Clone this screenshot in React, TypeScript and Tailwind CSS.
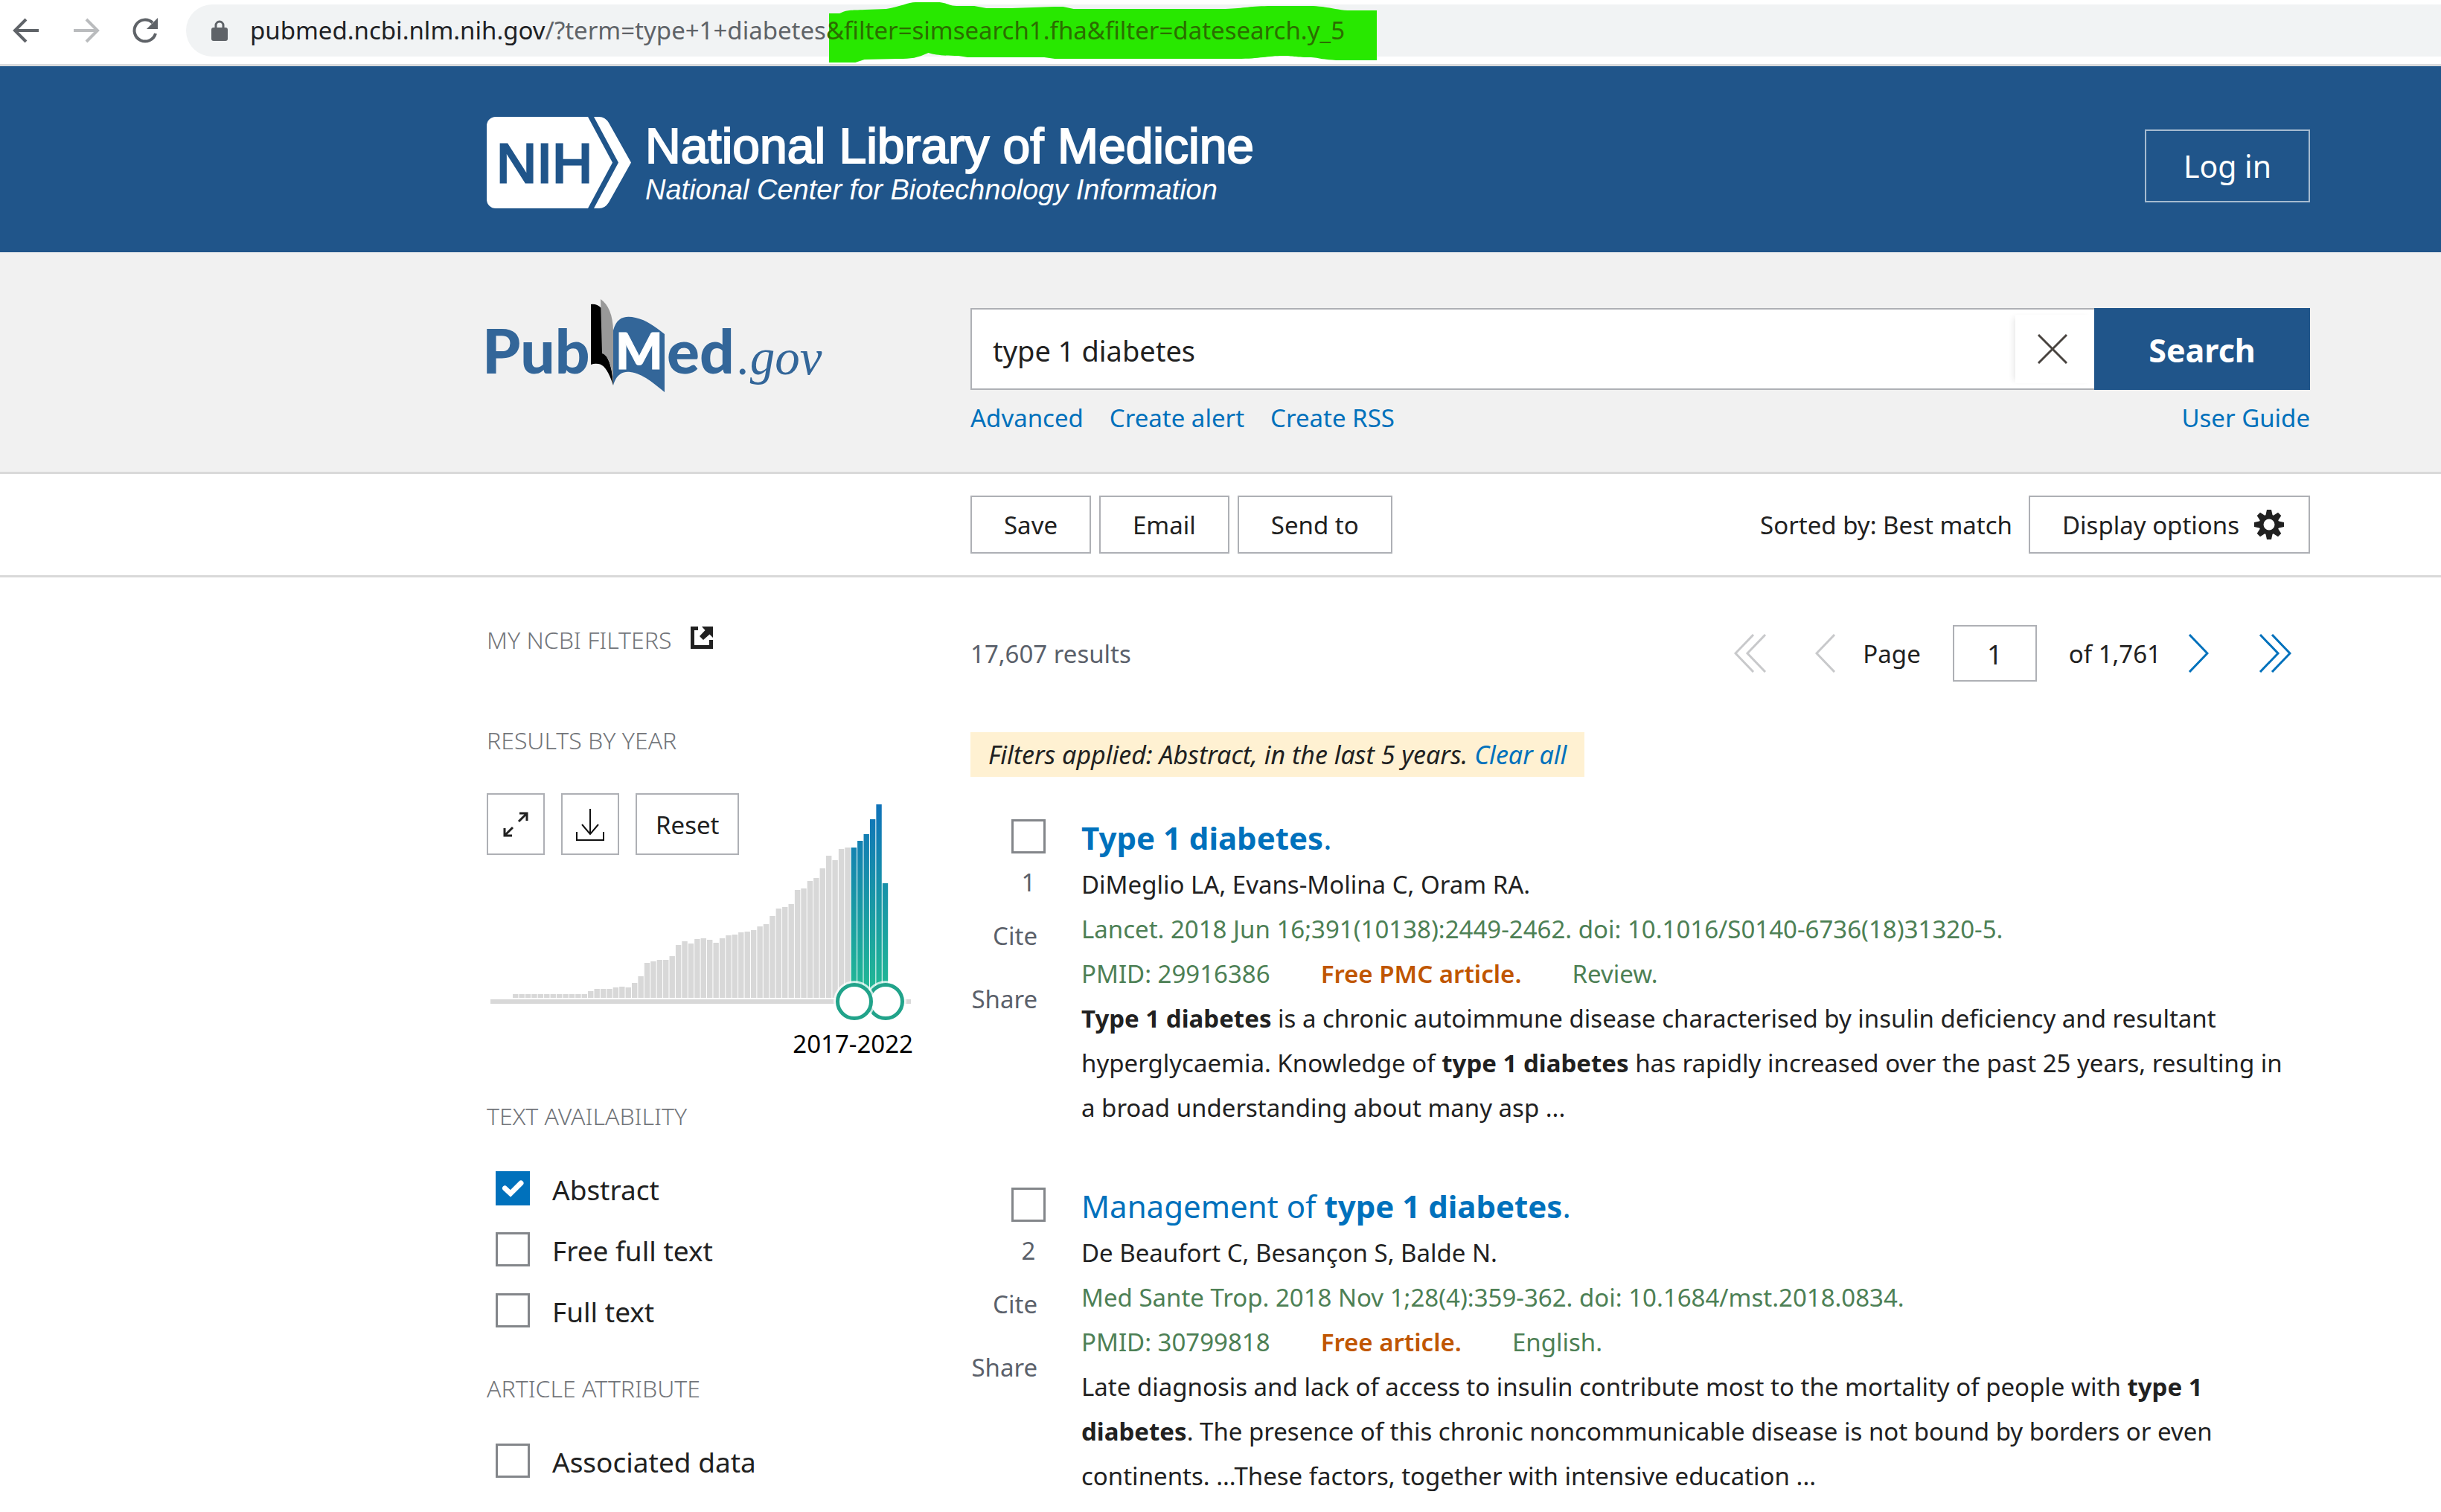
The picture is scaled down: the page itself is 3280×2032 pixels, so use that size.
import { useState, type ReactNode } from "react";

const barHeights = [
  5, 5, 5, 5, 5, 5, 5, 5, 5, 5, 5, 5, 9, 12, 12, 12, 14, 15, 14, 20, 29, 47, 49, 51, 51, 56, 71, 76, 73, 79, 80, 78,
  74, 80, 84, 85, 88, 89, 91, 96, 99, 110, 120, 122, 126, 145, 147, 157, 161, 174, 191, 185, 200, 202, 202, 211, 220,
  240, 260, 154,
];
const selectedFrom = 54;

function BrowserBar() {
  return (
    <div className="flex items-center border-b-3 border-[#dadbdd] bg-white pt-[6px] pb-[10px]">
      <button aria-label="Back" className="ml-[16px]">
        <svg width="38" height="38" viewBox="0 0 38 38" fill="none" stroke="#5f6368" strokeWidth="4">
          <path d="M36 19H5M19 4L4 19l15 15" />
        </svg>
      </button>
      <button aria-label="Forward" className="ml-[43px]">
        <svg width="38" height="38" viewBox="0 0 38 38" fill="none" stroke="#babcbe" strokeWidth="4">
          <path d="M2 19h31M19 4l15 15-15 15" />
        </svg>
      </button>
      <button aria-label="Reload" className="ml-[41px]">
        <svg width="38" height="38" viewBox="0 0 38 38" fill="none">
          <path d="M33 23A14.500 14.500 0 1 1 29 8.500" stroke="#5f6368" strokeWidth="4" />
          <path d="M36 2v15H21z" fill="#5f6368" />
        </svg>
      </button>
      <div className="ml-[36px] flex h-[70px] flex-1 items-center rounded-l-full bg-[#f1f3f4] pl-[34px]">
        <svg width="22" height="28" viewBox="0 0 22 28" className="mr-[30px] shrink-0">
          <path d="M6 12V7a5 5 0 0 1 10 0v5" fill="none" stroke="#5f6368" strokeWidth="3" />
          <rect x="0" y="10" width="22" height="18" rx="3" fill="#5f6368" />
        </svg>
        <p className="text-[33px] leading-[70px] whitespace-nowrap text-[#5f6368]">
          <span className="text-[#202124]">pubmed.ncbi.nlm.nih.gov</span>/?term=type+1+diabetes
          <span className="relative isolate inline-block text-[#2b6e00]">
            <svg
              className="absolute top-[-4px] left-[4px] -z-10 h-[84px] w-[736px]"
              viewBox="0 0 728 84"
              preserveAspectRatio="none"
            >
              <path
                d="M0 16h14C24 11 28 12 48 11l28-1C95 7 105 1 115 1h32c14 2 12 5 26 5h20l16 3h34l56-2h12l14 3h202c26-1 32-4 62-4h54c20 1 30 5 46 6h40v67h-55c-20-1-25-4-36-4-20 0-20-2-35-2-20 0-30 4-60 4H300l-14-2H184l-12-2c-20 0-30-1-40-4-15 7-22 8-40 8l-45 1-12 4H0z"
                fill="#28e800"
              />
            </svg>
            &amp;filter=simsearch1.fha&amp;filter=datesearch.y_5
          </span>
        </p>
      </div>
    </div>
  );
}

function SiteHeader() {
  return (
    <header className="flex h-[250px] items-start justify-between bg-[#20558a] pt-[68px] pr-[176px] pl-[654px] text-white">
      <a href="#home" className="flex">
        <svg width="196" height="123" viewBox="0 0 196 123" aria-label="NIH">
          <path d="M12 0H136L169 61.500 136 123H12A12 12 0 0 1 0 111V12A12 12 0 0 1 12 0z" fill="#fff" />
          <path d="M144 0h7q8 0 13 8l30 53.500-30 53.500q-5 8-13 8h-7l33-61.500z" fill="#fff" />
          <text
            x="13"
            y="88"
            fontFamily="Liberation Sans, sans-serif"
            fontSize="75"
            fill="#20558a"
            stroke="#20558a"
            strokeWidth="3"
          >
            NIH
          </text>
        </svg>
        <div className="mt-[6px] ml-[17px] font-['Liberation_Sans',sans-serif] whitespace-nowrap">
          <p className="text-[66px] leading-[66px] [-webkit-text-stroke:2px_white]">National Library of Medicine</p>
          <p className="mt-[3px] text-[38px] leading-[46px] italic">National Center for Biotechnology Information</p>
        </div>
      </a>
      <button className="mt-[17px] h-[98px] border-2 border-[#a6bbd0] px-[50px] pt-[2px] text-[41px]">Log in</button>
    </header>
  );
}

function PubMedLogo() {
  return (
    <svg width="460" height="130" viewBox="25 20 460 130" aria-label="PubMed.gov" className="-ml-[8px]">
      <g fill="#336699" fontFamily="Lato, sans-serif" fontWeight="900" fontSize="82">
        <text x="27" y="122">
          Pub
        </text>
        <text x="275" y="122">
          ed
        </text>
      </g>
      <path d="M173 29q8-1 14 5l2 60q12 8 14 44-9-28-20-29-5-1-10 1z" fill="#000" />
      <path d="M186 22q16 11 17 42v73q-2-38-15-42z" fill="#999" />
      <path d="M203 64c5-18 16-20 30-17 15 3 26 12 39 22v78c-16-13-30-25-46-27-12-2-20 6-23 18z" fill="#336699" />
      <text
        x="206"
        y="116"
        fontFamily="Lato, sans-serif"
        fontWeight="900"
        fontSize="67"
        fill="#fff"
        stroke="#fff"
        strokeWidth="1"
      >
        M
      </text>
      <text x="370" y="123" fontFamily="Liberation Serif, serif" fontStyle="italic" fontSize="67" fill="#336699">
        .gov
      </text>
    </svg>
  );
}

function SearchHeader() {
  const [term, setTerm] = useState("type 1 diabetes");
  return (
    <div className="flex border-b-3 border-[#d9d9d9] bg-[#f1f1f1] pt-[61px] pr-[176px] pb-[50px] pl-[654px]">
      <a href="#pubmed" className="w-[650px] shrink-0">
        <PubMedLogo />
      </a>
      <div className="mt-[14px] flex-1">
        <form className="flex h-[110px]" onSubmit={(e) => e.preventDefault()}>
          <div className="flex flex-1 items-center border-2 border-r-0 border-[#aeb0b5] bg-white">
            <input
              aria-label="Search term"
              value={term}
              onChange={(e) => setTerm(e.target.value)}
              className="h-full flex-1 px-[28px] pt-[4px] text-[38px] text-[#212121] outline-none"
            />
            <button
              type="button"
              aria-label="Clear search"
              onClick={() => setTerm("")}
              className="flex h-[92px] w-[106px] items-center pl-[30px] shadow-[-6px_0_8px_-4px_rgba(0,0,0,0.1)]"
            >
              <svg width="40" height="40" viewBox="0 0 40 40" stroke="#494440" strokeWidth="3">
                <path d="M1 1l38 38M39 1L1 39" />
              </svg>
            </button>
          </div>
          <button className="w-[290px] bg-[#20558a] pt-[5px] text-[43px] font-bold text-white">Search</button>
        </form>
        <nav className="mt-[16px] flex gap-[35px] text-[33px] leading-[44px] text-[#0071bc]">
          <a href="#advanced">Advanced</a>
          <a href="#alert">Create alert</a>
          <a href="#rss">Create RSS</a>
          <a href="#guide" className="ml-auto">
            User Guide
          </a>
        </nav>
      </div>
    </div>
  );
}

function Gear() {
  return (
    <svg width="40" height="40" viewBox="-20 -20 40 40" fill="#212121">
      <circle r="10.500" fill="none" stroke="#212121" strokeWidth="6" />
      {[0, 45, 90, 135, 180, 225, 270, 315].map((a) => (
        <path key={a} d="M-5-11L-3-20H3L5-11z" transform={`rotate(${a})`} />
      ))}
    </svg>
  );
}

const outlineButton = "h-[78px] border-2 border-[#aeb0b5] px-[43px] pt-[2px] text-[33px]";

function Toolbar() {
  return (
    <div className="flex items-center border-b-3 border-[#d9d9d9] py-[29px] pr-[176px] pl-[1304px]">
      <div className="flex gap-[11px]">
        <button className={outlineButton}>Save</button>
        <button className={outlineButton}>Email</button>
        <button className={outlineButton}>Send to</button>
      </div>
      <span className="ml-auto pt-[2px] text-[33px]">Sorted by: Best match</span>
      <button className="ml-[22px] flex h-[78px] items-center gap-[20px] border-2 border-[#aeb0b5] pr-[33px] pl-[43px] text-[33px]">
        <span className="pt-[2px]">Display options</span>
        <Gear />
      </button>
    </div>
  );
}

function Heading({ children }: { children: ReactNode }) {
  return <h3 className="text-[32px] leading-[40px] font-light text-[#72757a] uppercase">{children}</h3>;
}

function Check({ checked = false, label }: { checked?: boolean; label?: string }) {
  const [on, setOn] = useState(checked);
  return (
    <span className="relative block size-[46px] shrink-0">
      <input
        type="checkbox"
        aria-label={label}
        checked={on}
        onChange={() => setOn(!on)}
        className="block size-[46px] appearance-none border-3 border-[#83868a] bg-white checked:border-[#0071bc] checked:bg-[#0071bc]"
      />
      {on && (
        <svg className="pointer-events-none absolute inset-0" width="46" height="46" viewBox="0 0 46 46" fill="none">
          <path d="M12.500 23l7.500 7 14-14" stroke="#fff" strokeWidth="7" strokeLinecap="round" />
        </svg>
      )}
    </span>
  );
}

function FilterOption({ children, checked }: { children: ReactNode; checked?: boolean }) {
  return (
    <label className="ml-[12px] flex h-[46px] items-center gap-[30px] text-[37px]">
      <Check checked={checked} />
      <span className="pt-[3px]">{children}</span>
    </label>
  );
}

function YearChart() {
  return (
    <svg width="577" height="306" viewBox="1 0 577 306" aria-label="Results by year" className="col-start-1 row-start-1">
      <defs>
        <linearGradient id="years" gradientUnits="userSpaceOnUse" x1="0" y1="14" x2="0" y2="275">
          <stop offset="0" stopColor="#1072b9" />
          <stop offset="1" stopColor="#21bb93" />
        </linearGradient>
      </defs>
      {barHeights.map((h, i) => (
        <rect
          key={i}
          x={36 + i * 8.42}
          y={275 - h}
          width="7.400"
          height={h}
          fill={i >= selectedFrom ? "url(#years)" : "#d8d8d8"}
        />
      ))}
      <rect x="6" y="277" width="565" height="6" fill="#d8d8d8" />
      {[537, 495].map((x) => (
        <g key={x}>
          <circle cx={x} cy="280" r="28" fill="#fff" fillOpacity="0.75" />
          <circle cx={x} cy="280" r="22.500" fill="#fff" stroke="#21a38a" strokeWidth="5" />
        </g>
      ))}
    </svg>
  );
}

function Sidebar() {
  return (
    <aside className="w-[650px] shrink-0">
      <a href="#filters" className="flex items-start gap-[26px]">
        <Heading>My NCBI Filters</Heading>
        <svg width="30" height="30" viewBox="0 0 30 30" className="mt-[2px]" fill="#212121">
          <path d="M0 0H10V5H5V25H25V18H30V30H0z" />
          <path d="M15 0H30V15L25.500 10.500 17 18 12 13 19.500 5z" />
        </svg>
      </a>
      <div className="mt-[95px]">
        <Heading>Results by year</Heading>
      </div>
      <div className="mt-[51px] grid">
        <YearChart />
        <div className="col-start-1 row-start-1 flex items-start gap-[22px]">
          <button aria-label="Expand chart" className="flex h-[83px] w-[78px] items-center justify-center border-2 border-[#aeb0b5]">
            <svg width="34" height="34" viewBox="0 0 34 34" fill="none" stroke="#212121" strokeWidth="3">
              <path d="M22 2h10v10M32 2L21 13M2 22v10h10M2 32l11-11" />
            </svg>
          </button>
          <button aria-label="Download" className="flex h-[83px] w-[78px] items-center justify-center border-2 border-[#aeb0b5]">
            <svg width="38" height="44" viewBox="0 0 38 44" fill="none" stroke="#111" strokeWidth="2">
              <path d="M19 1v34M8 22l11 13 11-13M1 32v11h36V32" />
            </svg>
          </button>
          <button className="h-[83px] border-2 border-[#aeb0b5] px-[25px] pt-[2px] text-[33px]">Reset</button>
        </div>
      </div>
      <p className="mt-[11px] w-[573px] text-right text-[33px] leading-[40px] text-black">2017-2022</p>
      <div className="mt-[57px] mb-[54px]">
        <Heading>Text availability</Heading>
      </div>
      <div className="flex flex-col gap-[36px]">
        <FilterOption checked>Abstract</FilterOption>
        <FilterOption>Free full text</FilterOption>
        <FilterOption>Full text</FilterOption>
      </div>
      <div className="mt-[62px] mb-[54px]">
        <Heading>Article attribute</Heading>
      </div>
      <FilterOption>Associated data</FilterOption>
    </aside>
  );
}

function Pager() {
  return (
    <div className="flex h-[76px] items-center text-[33px]">
      <button aria-label="First page">
        <svg width="44" height="52" viewBox="0 0 44 52" fill="none" stroke="#c8c9cb" strokeWidth="3">
          <path d="M26 1L2 26l24 25M42 1L18 26l24 25" />
        </svg>
      </button>
      <button aria-label="Previous page" className="ml-[65px]">
        <svg width="28" height="52" viewBox="0 0 28 52" fill="none" stroke="#c8c9cb" strokeWidth="3">
          <path d="M26 1L2 26l24 25" />
        </svg>
      </button>
      <label htmlFor="page" className="ml-[36px] pt-[2px]">
        Page
      </label>
      <input
        id="page"
        defaultValue="1"
        className="mx-[43px] h-[76px] w-[113px] border-2 border-[#aeb0b5] pt-[2px] text-center text-[36px]"
      />
      <span className="pt-[2px]">of 1,761</span>
      <button aria-label="Next page" className="ml-[36px]">
        <svg width="28" height="52" viewBox="0 0 28 52" fill="none" stroke="#0071bc" strokeWidth="3">
          <path d="M2 1l24 25L2 51" />
        </svg>
      </button>
      <button aria-label="Last page" className="mr-[25px] ml-[67px]">
        <svg width="44" height="52" viewBox="0 0 44 52" fill="none" stroke="#0071bc" strokeWidth="3">
          <path d="M2 1l24 25L2 51M18 1l24 25-24 25" />
        </svg>
      </button>
    </div>
  );
}

type ArticleProps = {
  n: number;
  title: ReactNode;
  authors: string;
  journal: string;
  pmid: string;
  free: string;
  kind: string;
  children: ReactNode;
};

function Article({ n, title, authors, journal, pmid, free, kind, children }: ArticleProps) {
  return (
    <article className="flex gap-[48px] text-[33px]">
      <div className="flex w-[101px] shrink-0 flex-col items-end leading-[40px] text-[#5b616b]">
        <div className="mt-[6px]">
          <Check label={`Select article ${n}`} />
        </div>
        <span className="mt-[19px] w-[46px] text-center">{n}</span>
        <button className="mt-[32px] mr-[11px]">Cite</button>
        <button className="mt-[45px] mr-[11px]">Share</button>
      </div>
      <div className="flex-1 pr-[24px] leading-[60px]">
        <h2 className="mb-[2px] text-[42px] leading-[62px] text-[#0071bc]">
          <a href={`#article-${n}`}>{title}</a>
        </h2>
        <p>{authors}</p>
        <p className="text-[#4d8055]">{journal}</p>
        <p className="flex gap-[68px] text-[#4d8055]">
          <span>PMID: {pmid}</span>
          <span className="font-semibold text-[#c05600]">{free}</span>
          <span>{kind}</span>
        </p>
        <p>{children}</p>
      </div>
    </article>
  );
}

export default function App() {
  return (
    <div className="min-h-screen bg-white font-['Noto_Sans',sans-serif] text-[#212121]">
      <BrowserBar />
      <SiteHeader />
      <SearchHeader />
      <Toolbar />
      <div className="flex pt-[64px] pr-[176px] pl-[654px]">
        <Sidebar />
        <main className="flex-1">
          <div className="flex items-center justify-between">
            <span className="pt-[2px] text-[33px] text-[#5b616b]">17,607 results</span>
            <Pager />
          </div>
          <p className="mt-[68px] w-fit bg-[#fff1d2] px-[24px] text-[34px] leading-[60px] italic">
            Filters applied: Abstract, in the last 5 years.{" "}
            <a href="#clear" className="text-[#0071bc]">
              Clear all
            </a>
          </p>
          <div className="mt-[51px] flex flex-col gap-[71px]">
            <Article
              n={1}
              title={
                <>
                  <b>Type 1 diabetes</b>.
                </>
              }
              authors="DiMeglio LA, Evans-Molina C, Oram RA."
              journal="Lancet. 2018 Jun 16;391(10138):2449-2462. doi: 10.1016/S0140-6736(18)31320-5."
              pmid="29916386"
              free="Free PMC article."
              kind="Review."
            >
              <b>Type 1 diabetes</b> is a chronic autoimmune disease characterised by insulin deficiency and resultant
              hyperglycaemia. Knowledge of <b>type 1 diabetes</b> has rapidly increased over the past 25 years, resulting
              in a broad understanding about many asp ...
            </Article>
            <Article
              n={2}
              title={
                <>
                  Management of <b>type 1 diabetes</b>.
                </>
              }
              authors="De Beaufort C, Besançon S, Balde N."
              journal="Med Sante Trop. 2018 Nov 1;28(4):359-362. doi: 10.1684/mst.2018.0834."
              pmid="30799818"
              free="Free article."
              kind="English."
            >
              Late diagnosis and lack of access to insulin contribute most to the mortality of people with{" "}
              <b>type 1 diabetes</b>. The presence of this chronic noncommunicable disease is not bound by borders or even
              continents. ...These factors, together with intensive education ...
            </Article>
          </div>
        </main>
      </div>
    </div>
  );
}
